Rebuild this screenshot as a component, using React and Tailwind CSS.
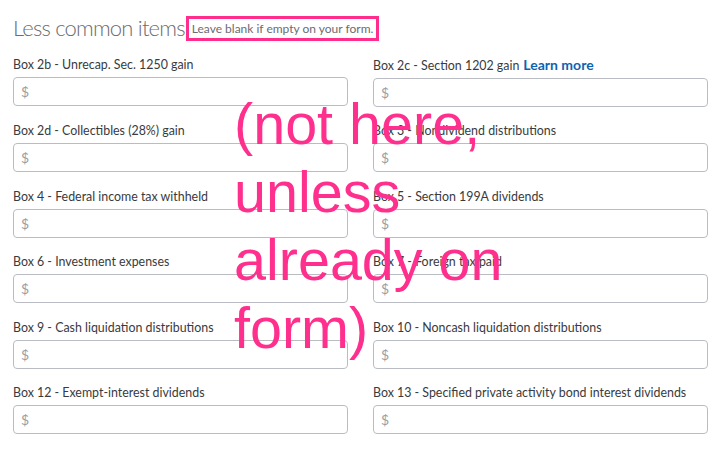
import React from 'react';

const fields = [
  { id: '2b', label: 'Box 2b - Unrecap. Sec. 1250 gain' },
  { id: '2c', label: 'Box 2c - Section 1202 gain', learnMore: true },
  { id: '2d', label: 'Box 2d - Collectibles (28%) gain' },
  { id: '3', label: 'Box 3 - Nondividend distributions' },
  { id: '4', label: 'Box 4 - Federal income tax withheld' },
  { id: '5', label: 'Box 5 - Section 199A dividends' },
  { id: '6', label: 'Box 6 - Investment expenses' },
  { id: '7', label: 'Box 7 - Foreign tax paid' },
  { id: '9', label: 'Box 9 - Cash liquidation distributions' },
  { id: '10', label: 'Box 10 - Noncash liquidation distributions' },
  { id: '12', label: 'Box 12 - Exempt-interest dividends' },
  { id: '13', label: 'Box 13 - Specified private activity bond interest dividends' }
];

function MoneyField({ label, learnMore }) {
  return (
    <div className="flex flex-col">
      <label className="text-[12.4px] leading-[18px] text-[#393a3d] mb-[3px] whitespace-nowrap">
        {label}
        {learnMore && (
          <a href="#" className="ml-[4px] text-[14px] font-bold text-[#0d63b0]">Learn more</a>
        )}
      </label>
      <div className="h-[29px] rounded-[4px] border border-[#b9bdc3] flex items-center pl-[7px]">
        <span className="text-[14px] text-[#9a9ea4]">$</span>
      </div>
    </div>
  );
}

export default function App() {
  return (
    <div className="relative w-[720px] h-[457px] bg-white overflow-hidden font-['Lato','Noto_Sans',sans-serif]">
      <div className="pl-[13px] pr-[12px] pt-[14px]">
        <div className="flex items-end h-[28px]">
          <h2 className="text-[22px] leading-[28px] font-light text-[#6b6c72] tracking-[-0.8px]">Less common items</h2>
          <div className="ml-[1px] border-[3px] border-[#ff2d8b] px-[3px] h-[25px] flex items-center mb-[1px]">
            <span className="text-[12px] text-[#6b6c72]">Leave blank if empty on your form.</span>
          </div>
        </div>

        <div className="grid grid-cols-2 gap-x-[25px] gap-y-[15.4px] mt-[14px]">
          {fields.map(f => (
            <MoneyField key={f.id} label={f.label} learnMore={f.learnMore} />
          ))}
        </div>
      </div>

      {/* annotation drawn over the screenshot */}
      <div className="absolute left-[234px] top-[90px] text-[57.5px] leading-[68px] text-[#ff2f8e] font-['Liberation_Sans',Arial,sans-serif] whitespace-pre pointer-events-none">
        {'(not here,\nunless\nalready on\nform)'}
      </div>
    </div>
  );
}
